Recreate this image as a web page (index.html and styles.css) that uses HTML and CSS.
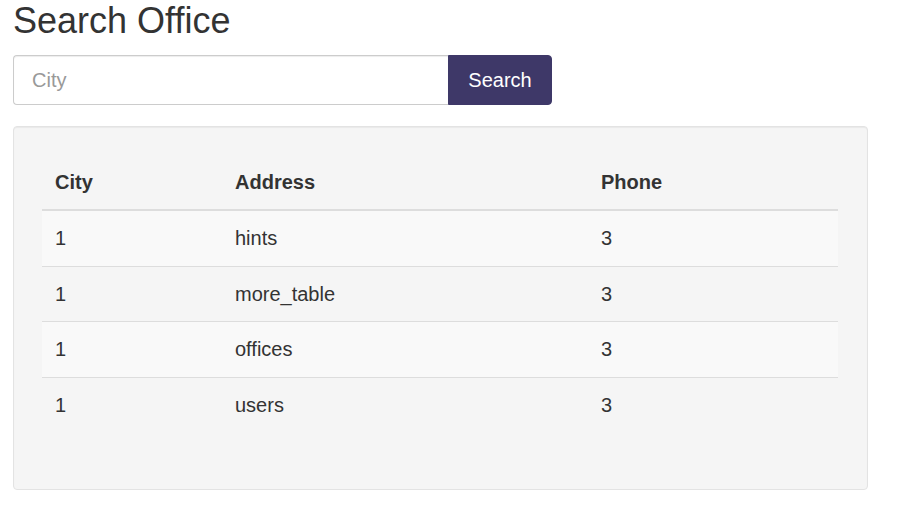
FILE: index.html
```html
<!DOCTYPE html>
<html>
<head>
<meta charset="utf-8">
<link rel="stylesheet" href="styles.css">
</head>
<body>
<div class="page">
  <h1 class="title">Search Office</h1>
  <form class="search">
    <input class="search-input" type="text" placeholder="City">
    <button class="search-btn" type="button">Search</button>
  </form>
  <div class="well">
    <table class="offices">
      <colgroup>
        <col class="c-city"><col class="c-addr"><col class="c-phone">
      </colgroup>
      <thead>
        <tr><th>City</th><th>Address</th><th>Phone</th></tr>
      </thead>
      <tbody>
        <tr><td>1</td><td>hints</td><td>3</td></tr>
        <tr><td>1</td><td>more_table</td><td>3</td></tr>
        <tr><td>1</td><td>offices</td><td>3</td></tr>
        <tr><td>1</td><td>users</td><td>3</td></tr>
      </tbody>
    </table>
  </div>
</div>
</body>
</html>
```
FILE: styles.css
```css
html, body {
  margin: 0;
  padding: 0;
  background: #fff;
}
body {
  font-family: "Liberation Sans", Arial, sans-serif;
  color: #333;
  font-size: 20px;
  line-height: 1.42857;
}
.page {
  padding: 1px 13px 0 13px;
  width: 855px;
}
.title {
  margin: 0 0 14px 0;
  font-size: 36px;
  font-weight: 400;
  line-height: 1.1;
  color: #333;
}
.search {
  display: flex;
  margin: 0;
  width: 539px;
  height: 50px;
}
.search-input {
  box-sizing: border-box;
  width: 435px;
  height: 50px;
  margin: 0;
  padding: 2px 18px 0 18px;
  border: 1px solid #ccc;
  border-right: 0;
  border-radius: 4px 0 0 4px;
  font-family: inherit;
  font-size: 20px;
  color: #555;
  box-shadow: inset 0 1px 1px rgba(0,0,0,.075);
  outline: none;
}
.search-input::placeholder {
  color: #999;
}
.search-btn {
  box-sizing: border-box;
  width: 104px;
  height: 50px;
  margin: 0;
  padding: 2px 0 0 0;
  border: 1px solid #3e3868;
  border-radius: 0 4px 4px 0;
  background: #3e3868;
  color: #fff;
  font-family: inherit;
  font-size: 20px;
}
.well {
  margin-top: 21px;
  box-sizing: border-box;
  width: 855px;
  padding: 28px 29px 28px 28px;
  background: #f5f5f5;
  border: 1px solid #e3e3e3;
  border-radius: 4px;
  box-shadow: inset 0 1px 1px rgba(0,0,0,.05);
}
.offices {
  width: 796px;
  border-collapse: collapse;
  border-spacing: 0;
  margin-bottom: 29px;
  table-layout: fixed;
}
.c-city { width: 180px; }
.c-addr { width: 366px; }
.c-phone { width: 250px; }
.offices th,
.offices td {
  padding: 13px;
  text-align: left;
  vertical-align: top;
  line-height: 1.42857;
}
.offices th {
  font-weight: 700;
  border-bottom: 2px solid #ddd;
}
.offices td {
  border-top: 1px solid #ddd;
}
.offices tbody tr:nth-child(odd) {
  background: #f9f9f9;
}
```
